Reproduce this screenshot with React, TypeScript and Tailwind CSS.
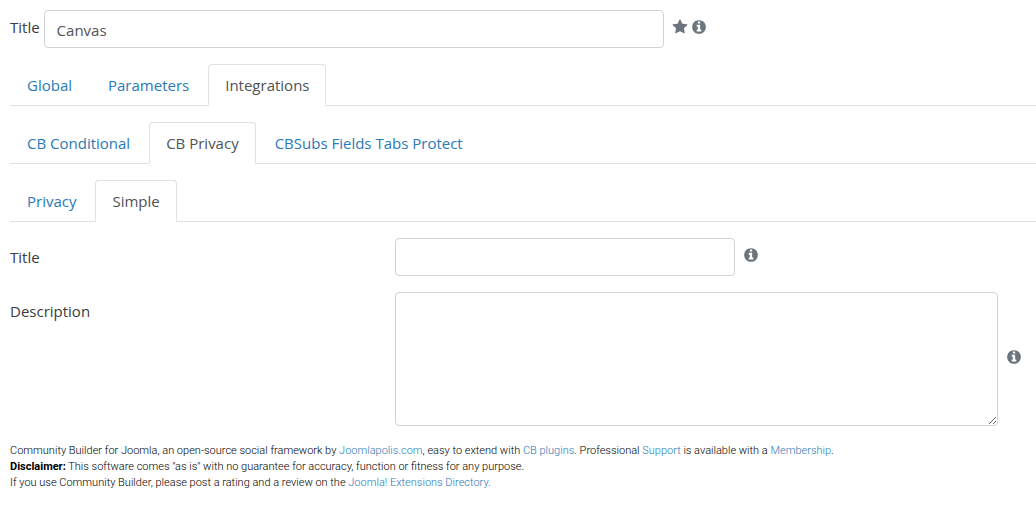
import type { ReactNode } from 'react'

const TAB_ROWS = [
  { id: 'main', tabs: ['Global', 'Parameters', 'Integrations'], active: 'Integrations' },
  {
    id: 'integrations',
    tabs: ['CB Conditional', 'CB Privacy', 'CBSubs Fields Tabs Protect'],
    active: 'CB Privacy',
  },
  { id: 'privacy', tabs: ['Privacy', 'Simple'], active: 'Simple' },
]

function StarIcon() {
  return (
    <svg viewBox="0 0 1792 1792" className="size-4 shrink-0 fill-[#6c757d]" aria-hidden="true">
      <path d="M1728 647q0 22-26 48l-363 354 86 500q1 7 1 20 0 21-10.5 35.5t-30.5 14.5q-19 0-40-12l-449-236-449 236q-22 12-40 12-21 0-31.5-14.5t-10.5-35.5q0-6 2-20l86-500-364-354q-25-27-25-48 0-37 56-46l502-73 225-455q19-41 49-41t49 41l225 455 502 73q56 9 56 46z" />
    </svg>
  )
}

function InfoIcon() {
  return (
    <svg viewBox="0 0 1792 1792" className="size-4 shrink-0 fill-[#6c757d]" aria-hidden="true">
      <path d="M1152 1376v-160q0-14-9-23t-23-9h-96v-512q0-14-9-23t-23-9h-320q-14 0-23 9t-9 23v160q0 14 9 23t23 9h96v320h-96q-14 0-23 9t-9 23v160q0 14 9 23t23 9h448q14 0 23-9t9-23zm-128-896v-160q0-14-9-23t-23-9h-192q-14 0-23 9t-9 23v160q0 14 9 23t23 9h192q14 0 23-9t9-23zm640 416q0 209-103 385.5t-279.5 279.5-385.5 103-385.5-103-279.5-279.5-103-385.5 103-385.5 279.5-279.5 385.5-103 385.5 103 279.5 279.5 103 385.5z" />
    </svg>
  )
}

function TabRow({ tabs, active }: { tabs: string[]; active: string }) {
  return (
    <ul className="mt-4 flex gap-0.5 border-b border-[#dee2e6]">
      {tabs.map((tab) => (
        <li key={tab} className="-mb-px">
          <a
            href="#"
            aria-current={tab === active ? 'page' : undefined}
            className={
              tab === active
                ? 'block rounded-t border border-[#dee2e6] border-b-white bg-white px-4 py-2 text-[#505355]'
                : 'block rounded-t border border-transparent px-4 py-2 text-[#2a7ab8]'
            }
          >
            {tab}
          </a>
        </li>
      ))}
    </ul>
  )
}

function FooterLink({ children }: { children: ReactNode }) {
  return (
    <a href="#" className="text-[#2a7ab8]">
      {children}
    </a>
  )
}

export default function App() {
  return (
    <main className="min-h-screen bg-white pt-2.5 pl-2.5 font-['Open_Sans','Noto_Sans',sans-serif] text-[15px] leading-6 text-[#3a3d40]">
      <div className="flex items-center gap-1">
        <label htmlFor="tab-title" className="pb-1">
          Title
        </label>
        <input
          id="tab-title"
          type="text"
          defaultValue="Canvas"
          className="h-[38px] w-[620px] rounded border border-[#ced4da] px-3 pt-0.5 text-[#505355]"
        />
        <span className="ml-1 flex gap-[3px] pb-1">
          <StarIcon />
          <InfoIcon />
        </span>
      </div>

      {TAB_ROWS.map((row) => (
        <TabRow key={row.id} tabs={row.tabs} active={row.active} />
      ))}

      <div className="mt-4 flex">
        <label htmlFor="privacy-title" className="w-3/8 pt-[7px]">
          Title
        </label>
        <div className="flex flex-1 items-center gap-2">
          <input
            id="privacy-title"
            type="text"
            className="h-[38px] w-[340px] rounded border border-[#ced4da] px-3"
          />
          <span className="pb-1">
            <InfoIcon />
          </span>
        </div>
      </div>

      <div className="mt-4 flex">
        <label htmlFor="privacy-description" className="w-3/8 pt-[7px]">
          Description
        </label>
        <div className="flex flex-1 items-center gap-2 pr-3.5">
          <textarea
            id="privacy-description"
            className="block h-[134px] flex-1 rounded border border-[#ced4da] px-3 py-1.5"
          />
          <span className="pb-1">
            <InfoIcon />
          </span>
        </div>
      </div>

      <footer className="mt-[17px] font-[Roboto,'Noto_Sans',sans-serif] text-[11px] leading-4 font-light text-black">
        <p>
          Community Builder for Joomla, an open-source social framework by{' '}
          <FooterLink>Joomlapolis.com</FooterLink>, easy to extend with{' '}
          <FooterLink>CB plugins</FooterLink>. Professional <FooterLink>Support</FooterLink> is
          available with a <FooterLink>Membership</FooterLink>.
        </p>
        <p>
          <strong className="font-bold">Disclaimer:</strong> This software comes "as is" with no
          guarantee for accuracy, function or fitness for any purpose.
        </p>
        <p>
          If you use Community Builder, please post a rating and a review on the{' '}
          <FooterLink>Joomla! Extensions Directory.</FooterLink>
        </p>
      </footer>
    </main>
  )
}
